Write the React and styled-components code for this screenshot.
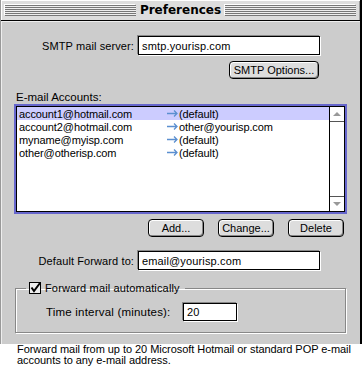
import React from 'react'
import styled, { createGlobalStyle } from 'styled-components'

const accounts = [
    { email: 'account1@hotmail.com', forward: '(default)', selected: true },
    { email: 'account2@hotmail.com', forward: 'other@yourisp.com' },
    { email: 'myname@myisp.com', forward: '(default)' },
    { email: 'other@otherisp.com', forward: '(default)' },
]

function Arrow() {
    return (
        <svg width="11" height="7" viewBox="0 0 11 7">
            <path d="M0 3.5 H10 M7 0.5 L10 3.5 L7 6.5" stroke="#5b8fd0" strokeWidth="1.3" fill="none" />
        </svg>
    )
}

function Check() {
    return (
        <svg width="13" height="13" viewBox="0 0 13 13">
            <rect x="0.5" y="0.5" width="11" height="11" fill="#eeeeee" stroke="#000" />
            <path d="M2.5 5.5 L5 9 L11 1" stroke="#000" strokeWidth="2" fill="none" />
        </svg>
    )
}

function App() {
    return (
        <>
            <GlobalStyle />
            <Window>
                <TitleBar>
                    <Stripes />
                    <Title>Preferences</Title>
                    <Stripes />
                </TitleBar>

                <Content>
                    <FieldRow top={15}>
                        <Label>SMTP mail server:</Label>
                        <TextField width={182}>smtp.yourisp.com</TextField>
                    </FieldRow>

                    <Button width={90} left={228} top={6}>SMTP Options...</Button>

                    <SectionLabel>E-mail Accounts:</SectionLabel>

                    <ListFrame>
                        <ListBox>
                            <Rows>
                                {accounts.map((a, i) => (
                                    <Row key={i} selected={a.selected}>
                                        <Email>{a.email}</Email>
                                        <Arrow />
                                        <Forward>{a.forward}</Forward>
                                    </Row>
                                ))}
                            </Rows>
                            <Scrollbar>
                                <ArrowCell><UpTriangle /></ArrowCell>
                                <Track />
                                <ArrowCell down><DownTriangle /></ArrowCell>
                            </Scrollbar>
                        </ListBox>
                    </ListFrame>

                    <ButtonRow>
                        <Button width={56}>Add...</Button>
                        <Button width={56}>Change...</Button>
                        <Button width={56}>Delete</Button>
                    </ButtonRow>

                    <FieldRow top={14}>
                        <Label>Default Forward to:</Label>
                        <TextField width={182}>email@yourisp.com</TextField>
                    </FieldRow>

                    <Group>
                        <Legend>
                            <Check />
                            <span>Forward mail automatically</span>
                        </Legend>
                        <IntervalRow>
                            <IntervalLabel>Time interval (minutes):</IntervalLabel>
                            <TextField width={54} height={18}>20</TextField>
                        </IntervalRow>
                    </Group>
                </Content>
            </Window>

            <Caption>
                Forward mail from up to 20 Microsoft Hotmail or standard POP e-mail<br />
                accounts to any e-mail address.
            </Caption>
        </>
    )
}

export default App

const GlobalStyle = createGlobalStyle`
    body {
        margin : 0 ;
        background : #ffffff ;
        font-family : "Liberation Sans", Arial, sans-serif ;
        font-size : 11px ;
        color : #000 ;
    }
`

const Window = styled.div`
    width : 362px ;
    box-sizing : border-box ;
    background : #cccccc ;
    border-left : 1px solid #999 ;
    border-right : 2px solid #000 ;
`

const TitleBar = styled.div`
    height : 21px ;
    box-sizing : border-box ;
    display : flex ;
    align-items : center ;
    padding : 0 4px ;
    background : #dddddd ;
    border-bottom : 1px solid #000 ;
    box-shadow : inset 1px 1px 0 #fff, inset -1px 0 0 #999 ;
`

const Stripes = styled.div`
    flex : 1 ;
    height : 11px ;
    background : repeating-linear-gradient(to bottom, #777 0 1px, #eeeeee 1px 2px) ;
    box-shadow : -1px -1px 0 #fff ;
`

const Title = styled.div`
    font-family : "DejaVu Sans", sans-serif ;
    font-weight : bold ;
    font-size : 12px ;
    padding : 0 4px ;
    line-height : 14px ;
`

const Content = styled.div`
    display : flex ;
    flex-direction : column ;
    align-items : flex-start ;
    padding : 0 0 11px 0 ;
    box-shadow : inset 1px 1px 0 #eee ;
`

const FieldRow = styled.div`
    display : flex ;
    align-items : center ;
    gap : 4px ;
    margin-top : ${props => props.top}px ;
`

const Label = styled.div`
    width : 133px ;
    text-align : right ;
    white-space : nowrap ;
    letter-spacing : 0.1px ;
`

const TextField = styled.div`
    width : ${props => props.width}px ;
    height : ${props => props.height || 19}px ;
    box-sizing : border-box ;
    background : #fff ;
    border : 1px solid #000 ;
    box-shadow : -1px -1px 0 #888, 1px 1px 0 #fff ;
    padding : 0 3px ;
    display : flex ;
    align-items : center ;
    font-size : 11px ;
    letter-spacing : 0.15px ;
    white-space : nowrap ;
`

const Button = styled.div`
    width : ${props => props.width}px ;
    height : 18px ;
    box-sizing : border-box ;
    margin-left : ${props => props.left || 0}px ;
    margin-top : ${props => props.top || 0}px ;
    border : 1px solid #000 ;
    border-radius : 4px ;
    background : #dddddd ;
    box-shadow : inset 1px 1px 0 #fff, inset -1px -1px 0 #888 ;
    display : flex ;
    align-items : center ;
    justify-content : center ;
    font-size : 11px ;
    white-space : nowrap ;
`

const SectionLabel = styled.div`
    margin : 12px 0 0 15px ;
    line-height : 13px ;
    font-size : 11.5px ;
`

const ListFrame = styled.div`
    margin-left : 13px ;
    width : 333px ;
    height : 110px ;
    box-sizing : border-box ;
    border : 2px solid #6666cc ;
`

const ListBox = styled.div`
    height : 100% ;
    box-sizing : border-box ;
    border : 1px solid #000 ;
    background : #fff ;
    display : flex ;
`

const Rows = styled.div`
    flex : 1 ;
    display : flex ;
    flex-direction : column ;
`

const Row = styled.div`
    height : 13px ;
    display : flex ;
    align-items : center ;
    padding-left : 2px ;
    background : ${props => props.selected ? '#ccccff' : 'transparent'} ;
    font-size : 11px ;
    letter-spacing : -0.1px ;
    white-space : nowrap ;
`

const Email = styled.span`
    width : 148px ;
`

const Forward = styled.span`
    margin-left : 1px ;
`

const Scrollbar = styled.div`
    width : 15px ;
    box-sizing : border-box ;
    border-left : 1px solid #000 ;
    display : flex ;
    flex-direction : column ;
`

const ArrowCell = styled.div`
    height : 15px ;
    box-sizing : border-box ;
    display : flex ;
    align-items : center ;
    justify-content : center ;
    border-bottom : ${props => props.down ? 'none' : '1px solid #555'} ;
    border-top : ${props => props.down ? '1px solid #555' : 'none'} ;
`

const Track = styled.div`
    flex : 1 ;
`

const UpTriangle = styled.div`
    width : 0 ;
    height : 0 ;
    border-left : 4px solid transparent ;
    border-right : 4px solid transparent ;
    border-bottom : 4px solid #999 ;
`

const DownTriangle = styled.div`
    width : 0 ;
    height : 0 ;
    border-left : 4px solid transparent ;
    border-right : 4px solid transparent ;
    border-top : 4px solid #999 ;
`

const ButtonRow = styled.div`
    display : flex ;
    gap : 14px ;
    margin : 5px 0 0 147px ;
`

const Group = styled.fieldset`
    margin : 12px 0 0 14px ;
    width : 331px ;
    box-sizing : border-box ;
    padding : 8px 0 11px 10px ;
    border : 1px solid #888 ;
    box-shadow : inset 1px 1px 0 #fff, 1px 1px 0 #fff ;
`

const Legend = styled.legend`
    padding : 0 5px 0 3px ;
    display : flex ;
    align-items : center ;
    gap : 3px ;
    font-size : 11px ;
    letter-spacing : 0.15px ;
    line-height : 13px ;
`

const IntervalRow = styled.div`
    display : flex ;
    align-items : center ;
    padding-left : 20px ;
`

const IntervalLabel = styled.div`
    width : 137px ;
    font-size : 11.5px ;
    letter-spacing : 0.2px ;
    white-space : nowrap ;
`

const Caption = styled.div`
    padding : 0 0 0 17px ;
    font-size : 11px ;
    line-height : 11px ;
    letter-spacing : -0.05px ;
`
